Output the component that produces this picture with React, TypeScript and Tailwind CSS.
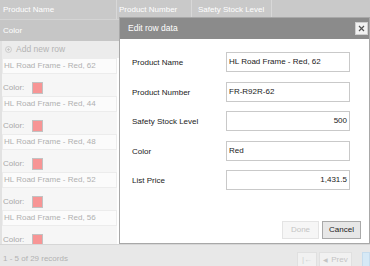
import React from 'react';

const font = { fontFamily: '"Liberation Sans", Arial, sans-serif' };

const records = [62, 44, 48, 52, 56];

const fields = [
  { label: 'Product Name', value: 'HL Road Frame - Red, 62', right: false },
  { label: 'Product Number', value: 'FR-R92R-62', right: false },
  { label: 'Safety Stock Level', value: '500', right: true },
  { label: 'Color', value: 'Red', right: false },
  { label: 'List Price', value: '1,431.5', right: true },
];

function PlusCircle() {
  return (
    <svg width="7" height="7" viewBox="0 0 8 8" className="shrink-0">
      <circle cx="4" cy="4" r="3.4" fill="none" stroke="#c4c4c4" strokeWidth="0.9" />
      <path d="M4 2.2v3.6M2.2 4h3.6" stroke="#c4c4c4" strokeWidth="0.9" />
    </svg>
  );
}

/**
 * Grid in row-template mode with the edit dialog open on top
 */
export default function App() {
  return (
    <div className="relative w-[370px] h-[266px] overflow-hidden bg-white text-[8px] leading-none" style={font}>
      <div className="flex flex-col h-full">
        {/* Header */}
        <div className="flex h-[20px] bg-[#c9c9c9] text-white border-b border-[#d4d4d4]">
          <div className="w-[117px] flex items-center pl-[3px] border-r border-[#d8d8d8]">Product Name</div>
          <div className="w-[75px] flex items-center pl-[2px] border-r border-[#d8d8d8]">Product Number</div>
          <div className="w-[80px] flex items-center pl-[6px] border-r border-[#d8d8d8]">Safety Stock Level</div>
          <div className="flex-1" />
        </div>
        <div className="flex items-center h-[21px] bg-[#c6c6c6] text-white pl-[3px]">Color</div>

        {/* Rows */}
        <div className="flex-1 overflow-hidden border-l-2 border-[#e2e2e2]">
          <div className="flex items-center gap-[4px] h-[17px] bg-[#ececec] pl-[3px] text-[#b4b4b4]">
            <PlusCircle />
            <span className="text-[8.5px]">Add new row</span>
          </div>
          {records.map((n) => (
            <div key={n} className="w-[115px]">
              <div className="flex items-center h-[16px] pl-[1px] bg-[#fbfbfb] border border-[#ececec] text-[#b0b0b0]">
                HL Road Frame - Red, {n}
              </div>
              <div className="flex items-end gap-[8px] h-[22px] pb-[2px] pl-[1px] bg-[#f6f6f6] text-[#a8a8a8]">
                <span className="pb-[2px]">Color:</span>
                <span className="w-[11px] h-[12px] bg-[#f79595] border border-[#c2c2c2]" />
              </div>
            </div>
          ))}
        </div>

        {/* Footer */}
        <div className="flex items-end h-[22px] bg-[#e8e8e8] border-t border-[#d6d6d6]">
          <div className="flex-1 self-center pl-[3px] pt-[6px] text-[#b2b2b2]">1 - 5 of 29 records</div>
          <div className="flex gap-[2px] translate-y-[2px]">
            <div className="w-[20px] h-[16px] flex items-center justify-center bg-[#f1f1f1] border border-[#e0e0e0] text-[#cfcfcf]">|←</div>
            <div className="w-[33px] h-[16px] flex items-center justify-center gap-[3px] bg-[#f1f1f1] border border-[#e0e0e0] text-[#c4c4c4]">
              <span className="text-[6px]">◀</span>Prev
            </div>
            <div className="w-[8px] h-[16px] ml-[8px] bg-[#d6e9f6] border border-[#c6dced]" />
          </div>
        </div>
      </div>

      {/* Dialog */}
      <div className="absolute left-[119px] top-[17px] w-[251px] h-[227px] bg-white border border-[#a8a8a8] flex flex-col">
        <div className="flex items-center justify-between h-[21px] bg-[#8b8b8b] pl-[8px] pr-[1px] text-white text-[8.5px]">
          <span>Edit row data</span>
          <button className="w-[13px] h-[13px] flex items-center justify-center bg-[#f2f2f2] border border-[#cfcfcf]">
            <svg width="7" height="7" viewBox="0 0 7 7">
              <path d="M1 1l5 5M6 1L1 6" stroke="#555" strokeWidth="1.2" />
            </svg>
          </button>
        </div>

        <div className="flex flex-col gap-[9.5px] pt-[13px] pl-[12px]">
          {fields.map((f) => (
            <div key={f.label} className="flex items-center">
              <div className="w-[94px] text-[#222] pt-[2px]">{f.label}</div>
              <div
                className={`w-[124px] h-[20px] flex items-center border border-[#c9c9c9] bg-white text-[#1a1a1a] ${
                  f.right ? 'justify-end pr-[2px]' : 'pl-[2px]'
                }`}
              >
                {f.value}
              </div>
            </div>
          ))}
        </div>

        <div className="flex justify-end gap-[3px] mt-auto mb-[4px] pr-[8px]">
          <button className="w-[37px] h-[18px] bg-[#f6f6f6] border border-[#e4e4e4] text-[#c4c4c4]">Done</button>
          <button className="w-[39px] h-[18px] bg-[#e7e7e7] border border-[#a9a9a9] text-[#222]">Cancel</button>
        </div>
      </div>
    </div>
  );
}
